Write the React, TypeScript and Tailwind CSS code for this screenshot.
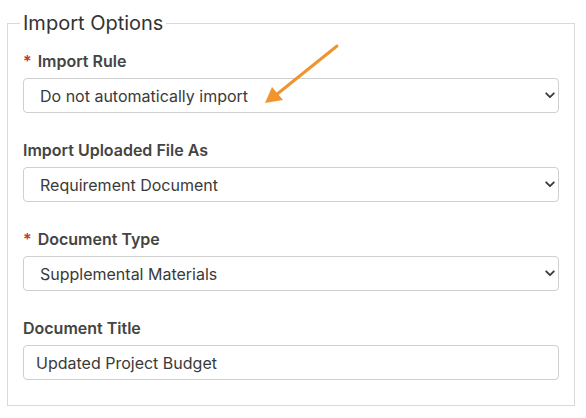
import { ChangeEvent, useState } from "react"

const selectFields = [
  {
    label: "Import Rule",
    required: true,
    value: "Do not automatically import",
    options: ["Do not automatically import", "Automatically import"],
  },
  {
    label: "Import Uploaded File As",
    required: false,
    value: "Requirement Document",
    options: ["Requirement Document", "Attachment"],
  },
  {
    label: "Document Type",
    required: true,
    value: "Supplemental Materials",
    options: ["Supplemental Materials", "Budget", "Narrative"],
  },
]

function FieldLabel({ text, required }: { text: string; required: boolean }) {
  return (
    <label className="block h-5 text-[16px] leading-5 font-semibold text-[#444]">
      {required && <span className="mr-[6px] text-[#c0392b]">*</span>}
      {text}
    </label>
  )
}

function SelectField({ label, required, value, options }: (typeof selectFields)[number]) {
  const [current, setCurrent] = useState(value)
  return (
    <div className="mb-[27px]">
      <FieldLabel text={label} required={required} />
      <div className="relative mt-[7px]">
        <select
          value={current}
          onChange={(e: ChangeEvent<HTMLSelectElement>) => setCurrent(e.target.value)}
          className="block h-[35px] w-full appearance-none rounded-[4px] border border-[#cfcfcf] bg-white pl-4 pr-8 text-[16px] text-[#3a3a3a] outline-none"
        >
          {options.map((o) => (
            <option key={o}>{o}</option>
          ))}
        </select>
        {/* chevron */}
        <svg
          className="pointer-events-none absolute right-[4px] top-[14px]"
          width="10"
          height="7"
          viewBox="0 0 10 7"
          fill="none"
        >
          <path d="M1.2 1.3 5 5.2 8.8 1.3" stroke="#3a3a3a" strokeWidth="1.8" strokeLinecap="round" strokeLinejoin="round" />
        </svg>
      </div>
    </div>
  )
}

export default function App() {
  const [title, setTitle] = useState("Updated Project Budget")

  return (
    <div className="relative h-[418px] w-[586px] bg-white font-['Inter',sans-serif]">
      <fieldset className="ml-[7px] w-[568px] border border-[#d9d9d9] px-[15px] pt-4 pb-[25px] mt-[11px]">
        <legend className="-ml-[3px] px-[3px] text-[20px] leading-6 text-[#333]">Import Options</legend>

        {selectFields.map((f) => (
          <SelectField key={f.label} {...f} />
        ))}

        <div>
          <FieldLabel text="Document Title" required={false} />
          <input
            value={title}
            onChange={(e) => setTitle(e.target.value)}
            className="mt-[7px] block h-[35px] w-full rounded-[4px] border border-[#cfcfcf] bg-white px-3 text-[16px] text-[#3a3a3a] outline-none"
          />
        </div>
      </fieldset>

      {/* annotation arrow */}
      <svg className="pointer-events-none absolute left-0 top-0" width="586" height="418">
        <line x1="337" y1="35" x2="276" y2="84" stroke="#f0952e" strokeWidth="3" strokeLinecap="round" />
        <polygon points="265,92 272,76 283,89" fill="#f0952e" />
      </svg>
    </div>
  )
}
